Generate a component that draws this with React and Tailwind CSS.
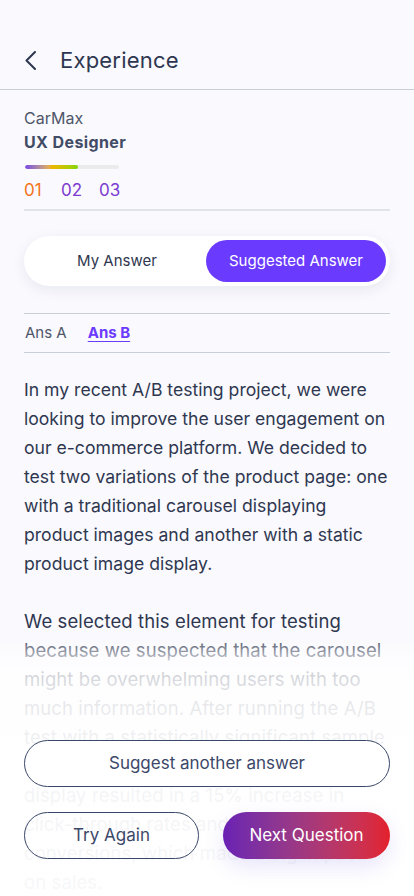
function App() {

  const font = { fontFamily: "Inter, 'Noto Sans', sans-serif" };

  return (
    <div
      className="relative h-[896px] w-full overflow-hidden bg-[#f9f9fe] text-[#2f3750]"
      style={font}
    >

      {/* HEADER */}
      <div className="flex items-center h-[90px] pt-[32px] px-[25px] border-b border-[#c9cedb]">
        <svg width="11" height="19" viewBox="0 0 11 19" fill="none">
          <polyline
            points="10,1 1.5,9.5 10,18"
            stroke="#2f3750"
            strokeWidth="2"
            strokeLinecap="round"
            strokeLinejoin="round"
          />
        </svg>
        <h1 className="ml-[24px] text-[22px] text-[#2f3750] tracking-[0.2px]">
          Experience
        </h1>
      </div>

      <div className="px-[24px]">

        {/* COMPANY */}
        <div className="pt-[18px] pb-[8px] border-b-2 border-[#e1e3ea]">
          <p className="text-[16px] leading-[20px] text-[#4f5669]">CarMax</p>
          <p className="text-[16px] leading-[28px] font-bold text-[#424b66] tracking-[0.4px]">UX Designer</p>

          <div className="mt-[9px] ml-[1px] w-[94px] h-[4px] rounded-full bg-[#ebebeb] overflow-hidden">
            <div className="w-[53px] h-full rounded-full bg-gradient-to-r from-[#7b3fe4] via-[#f0b400] to-[#7fd60b]" />
          </div>

          <div className="flex mt-[10px] text-[17px] leading-[22px]">
            <span className="text-[#f5731b] w-[37px]">01</span>
            <span className="text-[#7c3bd0] w-[38px]">02</span>
            <span className="text-[#7c3bd0]">03</span>
          </div>
        </div>

        {/* TOGGLE */}
        <div className="mt-[25px] flex items-center h-[50px] p-[4px] rounded-full bg-white shadow-[0_4px_14px_rgba(40,40,80,0.08)]">
          <button className="flex-1 h-full text-[15px] text-[#2f3750]">My Answer</button>
          <button className="w-[180px] h-full rounded-full bg-[#6a3bff] text-[15px] text-white">
            Suggested Answer
          </button>
        </div>

        {/* ANSWER TABS */}
        <div className="mt-[27px] flex items-center h-[40px] border-y border-[#c9cedb] text-[15px]">
          <span className="ml-[1px] text-[#4f5669]">Ans A</span>
          <span className="ml-[21px] font-bold text-[#6a3bff] underline underline-offset-[3px]">Ans B</span>
        </div>

        {/* ANSWER */}
        <div className="pt-[22px] leading-[29px] text-[#2f3750]">
          <p className="text-[17.6px]">
            In my recent A/B testing project, we were looking to improve the user engagement on our e-commerce platform. We decided to test two variations of the product page: one with a traditional carousel displaying product images and another with a static product image display.
          </p>
          <p className="mt-[29px] text-[18.5px] tracking-[0.1px]">
            We selected this element for testing because we suspected that the carousel might be overwhelming users with too much information. After running the A/B test with a statistically significant sample size, we found that the static image display resulted in a 15% increase in click-through rates and a 10% increase in conversions, which made a big impact on sales.
          </p>
        </div>

      </div>

      {/* FADE + ACTIONS */}
      <div className="absolute left-0 right-0 bottom-0 h-[262px] bg-[linear-gradient(to_bottom,rgba(255,255,255,0)_0%,rgba(255,255,255,0.72)_10%,rgba(255,255,255,0.88)_24%,rgba(255,255,255,0.94)_45%,rgba(255,255,255,0.96)_100%)]" />

      <div className="absolute left-0 right-0 bottom-[37px] px-[24px] flex flex-col gap-[25px]">
        <button className="h-[47px] rounded-full border border-[#3c4869] bg-white text-[17px] text-[#3c4869]">
          Suggest another answer
        </button>
        <div className="flex gap-[24px]">
          <button className="w-[175px] h-[47px] rounded-full border border-[#3c4869] text-[17px] text-[#3c4869]">
            Try Again
          </button>
          <button className="flex-1 h-[47px] rounded-full bg-gradient-to-r from-[#6a1fb4] to-[#e3202a] text-[17px] text-white shadow-[0_8px_20px_rgba(100,90,220,0.15)]">
            Next Question
          </button>
        </div>
      </div>

    </div>
  );
}

export default App;
